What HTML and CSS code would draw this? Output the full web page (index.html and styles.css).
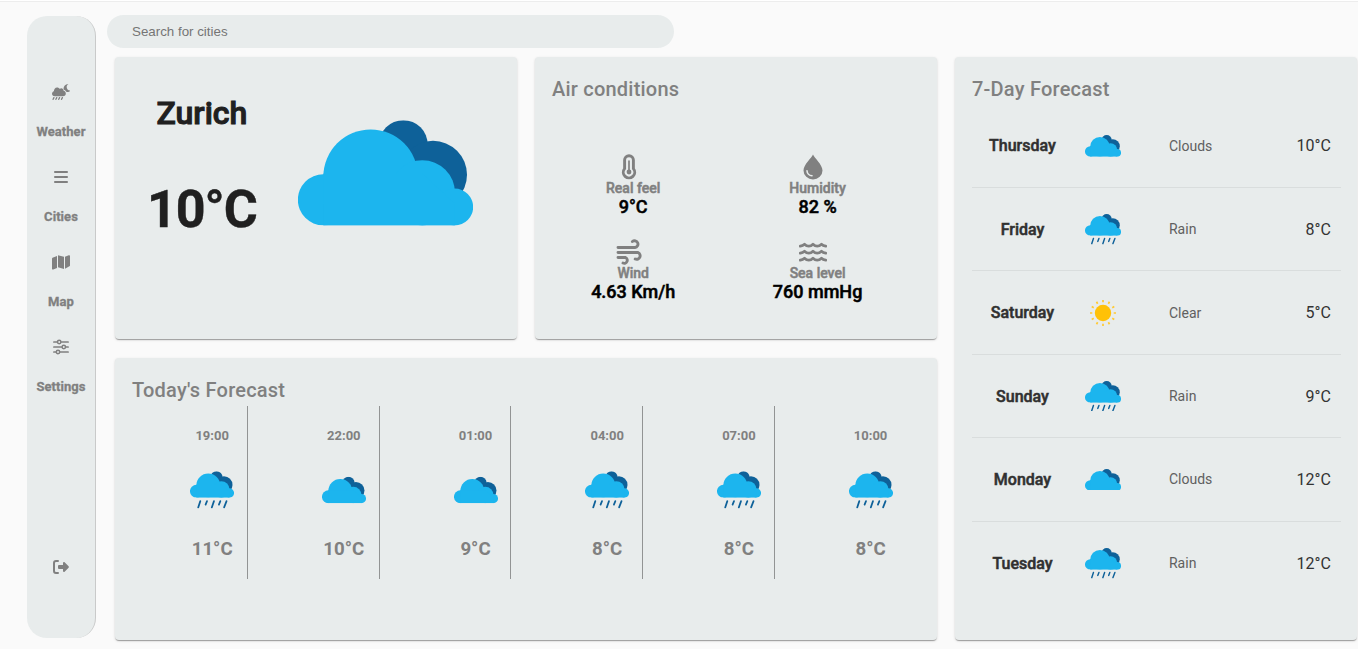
FILE: index.html
```html
<!DOCTYPE html>
<html lang="en">
<head>
<meta charset="utf-8">
<title>Weather</title>
<link rel="stylesheet" href="styles.css">
</head>
<body>
<svg class="defs" width="0" height="0">
  <symbol id="clouds" viewBox="0 0 525 317">
    <g fill="#0e6199"><circle cx="316" cy="73" r="73"/><circle cx="405" cy="164" r="102"/></g>
    <g fill="#1cb5ee"><circle cx="76" cy="239" r="76.5"/><circle cx="218" cy="170" r="142"/><circle cx="373" cy="218" r="98"/><circle cx="470" cy="260.500" r="55.500"/><path d="M76 160H373L470 250V316H76z"/></g>
  </symbol>
  <symbol id="rain" viewBox="0 0 525 450">
    <use href="#clouds" width="525" height="317"/>
    <path d="M123 358 98 433M203 358 186 400M286 358 260 433M362 358 345 400M436 358 407 433" stroke="#0e6199" stroke-width="21" stroke-linecap="round"/>
  </symbol>
  <symbol id="sun" viewBox="-13 -13 26 26">
    <circle r="8.200" fill="#ffc107"/>
    <path d="M0-13V-10.700M0 13V10.700M-13 0H-10.700M13 0H10.700M6.500-11.260 5.350-9.270M11.260-6.500 9.270-5.350M-6.500-11.260-5.350-9.270M-11.260-6.500-9.270-5.350M6.500 11.260 5.350 9.270M11.260 6.500 9.270 5.350M-6.500 11.260-5.350 9.270M-11.260 6.500-9.270 5.350" stroke="#ffc933" stroke-width="1.700"/>
  </symbol>
</svg>
<div class="app">
  <nav class="sidebar">
    <a class="nav-item"><svg width="18" height="16" viewBox="0 0 576 512" fill="currentColor"><path d="M80 392C36 392 0 357 0 312c0-40 27-70 60-80 0-62 38-122 104-122 36 0 68 18 84 46 14-12 30-18 48-18 42 0 72 34 76 78 42 8 70 42 70 86 0 54-40 90-88 90z"/><path d="M575 222c-16 22-48 36-78 36-14 0-28-3-40-8-18-34-40-58-76-66-8-10-12-20-12-30C366 75 425 6 514 0c6 0 8 7 3 10-32 18-48 50-48 84 0 60 47 112 100 117 6 1 9 6 6 11z"/><path d="M62 436 36 490M152 436l-26 54M242 436l-26 54M332 436l-26 54" stroke="currentColor" stroke-width="42" stroke-linecap="round"/></svg><span>Weather</span></a>
    <a class="nav-item"><svg width="14" height="16" viewBox="0 0 14 16" fill="none" stroke="currentColor" stroke-width="1.800" stroke-linecap="round"><path d="M.9 3h12.200M.9 8h12.200M.9 13h12.200"/></svg><span>Cities</span></a>
    <a class="nav-item"><svg width="18" height="16" viewBox="0 0 576 512" fill="currentColor"><path d="M384 476 192 421V36l192 55zm32-1V89l119-47c19-8 41 6 41 27v296c0 13-8 25-20 30zM16 120l144-57v386L41 497C22 505 0 491 0 470V150c0-13 4-25 16-30z"/></svg><span>Map</span></a>
    <a class="nav-item"><svg width="16" height="16" viewBox="0 0 16 16" fill="none" stroke="currentColor" stroke-width="1.700" stroke-linecap="round"><path d="M.9 3H4M8.500 3h6.600M.9 8h7.800M13.200 8h1.900M.9 13H2.800M7.300 13h7.800"/><g stroke-width="1.500"><circle cx="6.200" cy="3" r="1.700"/><circle cx="10.800" cy="8" r="1.700"/><circle cx="5" cy="13" r="1.700"/></g></svg><span>Settings</span></a>
    <a class="logout"><svg width="16" height="14" viewBox="0 0 16 14" fill="currentColor"><path d="M5 1H3a2 2 0 0 0-2 2v8a2 2 0 0 0 2 2h2" fill="none" stroke="currentColor" stroke-width="2" stroke-linecap="round"/><path d="M10 2.900c0-.9.900-1.300 1.600-.7l4 4c.4.400.4 1.100 0 1.600l-4 4c-.7.600-1.600.2-1.600-.7V9H6a1 1 0 0 1-1-1V6a1 1 0 0 1 1-1h4z"/></svg></a>
  </nav>
  <main class="content">
    <input class="search" type="text" placeholder="Search for cities">
    <div class="board">
      <section class="card current">
        <div class="summary"><h1 class="faux">Zurich</h1><p class="now">10°C</p></div>
        <svg class="hero" viewBox="0 0 525 317"><use href="#clouds"/></svg>
      </section>
      <section class="card air">
        <h2>Air conditions</h2>
        <div class="metrics">
          <div class="metric"><svg width="26" height="26" viewBox="0 0 26 26" fill="none" stroke="currentColor"><path d="M8.600 6.100a4.400 4.400 0 0 1 8.800 0v8.500a5.700 5.700 0 1 1-8.800 0z" stroke-width="2.900"/><path d="M13 7v11" stroke-width="1.700" stroke-linecap="round"/><circle cx="13" cy="18" r="2.400" fill="currentColor" stroke="none"/></svg><span class="faux">Real feel</span><b class="faux">9°C</b></div>
          <div class="metric"><svg width="26" height="26" viewBox="0 0 26 26"><path d="M13 .5C14 3.600 22.500 10.500 22.500 16.500a9.500 9 0 0 1-19 0C3.500 10.500 12 3.600 13 .5z" fill="currentColor"/><path d="M7 16.700a5.200 5.200 0 0 0 5 5" fill="none" stroke="#e8ecec" stroke-width="1.600" stroke-linecap="round"/></svg><span class="faux">Humidity</span><b class="faux">82 %</b></div>
          <div class="metric"><svg width="26" height="26" viewBox="0 0 26 26" fill="none" stroke="currentColor" stroke-width="2.900" stroke-linecap="round"><path d="M2 8.500h17a3.400 3.400 0 1 0-2.600-6M2 13.500h20a3.500 3.500 0 1 1-2.800 6.500M2 18.500h7.500a2.900 2.900 0 1 1-2.500 5.500"/></svg><span class="faux">Wind</span><b class="faux">4.63 Km/h</b></div>
          <div class="metric"><svg width="28" height="26" viewBox="0 0 28 26" fill="none" stroke="currentColor" stroke-width="2.800" stroke-linecap="round" stroke-linejoin="round"><path d="M1.300 7.200Q3.800 6.700 5.500 5.200Q7.500 7.200 9.800 7.200T14 5.200Q16 7.200 18.200 7.200T22.500 5.200Q24 6.700 26.700 7.200M1.300 14.200Q3.800 13.700 5.500 12.200Q7.500 14.200 9.800 14.200T14 12.200Q16 14.200 18.200 14.200T22.500 12.200Q24 13.700 26.700 14.200M1.300 21.200Q3.800 20.700 5.500 19.200Q7.500 21.200 9.800 21.200T14 19.200Q16 21.200 18.200 21.200T22.500 19.200Q24 20.700 26.700 21.200"/></svg><span class="faux">Sea level</span><b class="faux">760 mmHg</b></div>
        </div>
      </section>
      <section class="card week">
        <h2>7-Day Forecast</h2>
        <ul>
          <li><strong class="faux">Thursday</strong><svg viewBox="0 0 525 317"><use href="#clouds"/></svg><span>Clouds</span><em>10°C</em></li>
          <li><strong class="faux">Friday</strong><svg viewBox="0 0 525 450"><use href="#rain"/></svg><span>Rain</span><em>8°C</em></li>
          <li><strong class="faux">Saturday</strong><svg class="sun" viewBox="0 0 26 26"><use href="#sun"/></svg><span>Clear</span><em>5°C</em></li>
          <li><strong class="faux">Sunday</strong><svg viewBox="0 0 525 450"><use href="#rain"/></svg><span>Rain</span><em>9°C</em></li>
          <li><strong class="faux">Monday</strong><svg viewBox="0 0 525 317"><use href="#clouds"/></svg><span>Clouds</span><em>12°C</em></li>
          <li><strong class="faux">Tuesday</strong><svg viewBox="0 0 525 450"><use href="#rain"/></svg><span>Rain</span><em>12°C</em></li>
        </ul>
      </section>
      <section class="card today">
        <h2>Today's Forecast</h2>
        <div class="hours">
          <div class="hour"><time>19:00</time><svg viewBox="0 0 525 450"><use href="#rain"/></svg><b>11°C</b></div>
          <div class="hour"><time>22:00</time><svg viewBox="0 0 525 317"><use href="#clouds"/></svg><b>10°C</b></div>
          <div class="hour"><time>01:00</time><svg viewBox="0 0 525 317"><use href="#clouds"/></svg><b>9°C</b></div>
          <div class="hour"><time>04:00</time><svg viewBox="0 0 525 450"><use href="#rain"/></svg><b>8°C</b></div>
          <div class="hour"><time>07:00</time><svg viewBox="0 0 525 450"><use href="#rain"/></svg><b>8°C</b></div>
          <div class="hour"><time>10:00</time><svg viewBox="0 0 525 450"><use href="#rain"/></svg><b>8°C</b></div>
        </div>
      </section>
    </div>
  </main>
</div>
</body>
</html>
```
FILE: styles.css
```css
* { box-sizing: border-box; }
body { margin: 0; background: #fff; color: #202020; font-family: Roboto, "Liberation Sans", sans-serif; overflow: hidden; }
h1, h2, p, ul { margin: 0; padding: 0; }
.defs { position: absolute; }
.app { display: flex; gap: 11px; height: 648px; margin-top: 1px; border-top: 1px solid #ededed; background: #fafafa; padding: 13px 0 0 27px; }
.faux { font-weight: 500; -webkit-text-stroke: .5px currentColor; }

.sidebar { width: 69px; height: 622px; margin-top: 1px; padding-top: 68px; background: #e8ecec; border-right: 1px solid #c9caca; border-radius: 20px; color: gray; display: flex; flex-direction: column; align-items: center; }
.nav-item { height: 85px; display: flex; flex-direction: column; align-items: center; font-size: 13px; font-weight: 700; line-height: 16px; letter-spacing: .05px; -webkit-text-stroke: .3px currentColor; }
.nav-item svg { margin-bottom: 24px; }
.logout { margin-top: 136px; line-height: 0; }

.content { flex: 1; }
.search { display: block; width: 567px; height: 33px; border: 0; border-radius: 20px; padding: 0 25px; background: #e8ecec; font: 13.333px "Liberation Sans", sans-serif; }
.search::placeholder { color: #757575; }

.board { display: grid; grid-template-columns: repeat(3, 402px); grid-template-rows: 282px 282px; gap: 19px 18px; padding: 9px 0 0 8.4px; }
.card { background: #e8ecec; border-radius: 4px; box-shadow: 0 2px 1px -1px rgba(0,0,0,.2), 0 1px 1px rgba(0,0,0,.14), 0 1px 3px rgba(0,0,0,.12); padding: 16px 16.6px; }
.card h2 { font-size: 20px; font-weight: 500; line-height: 32px; letter-spacing: .22px; color: gray; }

.current { display: flex; padding: 0; }
.summary { width: 173px; padding-top: 37px; text-align: center; }
.summary h1 { font-size: 32px; line-height: 38px; -webkit-text-stroke-width: 1px; }
.now { font-size: 52px; font-weight: 700; line-height: 60px; margin-top: 48px; letter-spacing: -1px; -webkit-text-stroke: .4px currentColor; }
.hero { width: 175px; height: 106px; margin: 63px 0 0 9.500px; }

.metrics { display: grid; grid-template-columns: 1fr 1fr; padding-top: 48.6px; margin: 0 11px 0 -11px; }
.metric { height: 85px; display: flex; flex-direction: column; align-items: center; color: gray; font-size: 14px; line-height: 17px; }
.metric svg { margin: 0 9px 0 0; }
.metric b { color: #000; font-size: 18px; line-height: 20px; }

.week { grid-row: span 2; }
.week ul { list-style: none; margin-top: -.3px; }
.week li { height: 83.4px; display: grid; grid-template-columns: 101px 60px 1fr auto; align-items: center; border-bottom: 1px solid #d9dddd; padding-right: 10px; }
.week li:last-child { border: 0; }
.week strong { font-size: 16px; text-align: center; color: #303030; }
.week svg { width: 36px; justify-self: center; }
.week svg.sun { width: 26px; }
.week li span { font-size: 14px; color: #606060; padding-left: 36px; }
.week em { font-style: normal; font-size: 16px; color: #333; }

.today { grid-column: span 2; }
.hours { display: grid; grid-template-columns: repeat(6, 131.7px); margin-left: -15.7px; }
.hour { height: 173px; padding: 20px 0 0 61px; border-right: 1px solid #929494; display: flex; flex-direction: column; align-items: center; color: gray; }
.hour:last-child { border-color: transparent; }
.hour time { font-size: 13px; font-weight: 700; line-height: 20px; }
.hour svg { width: 44px; height: 38px; margin: 25px 0 28px; }
.hour b { font-size: 18.7px; line-height: 24px; }
```
